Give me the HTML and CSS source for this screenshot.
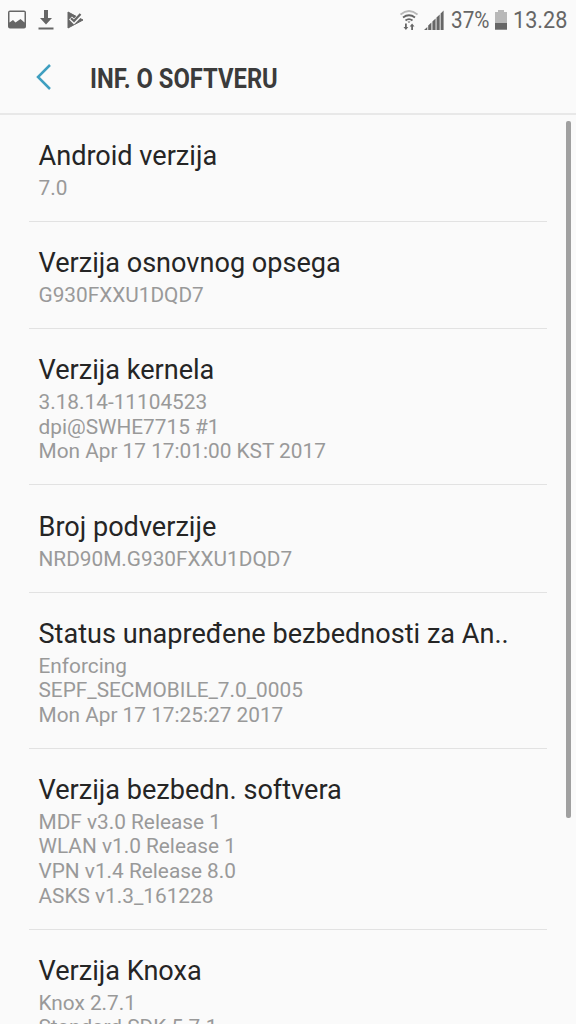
FILE: index.html
```html
<!DOCTYPE html>
<html lang="sr">
<head>
<meta charset="utf-8">
<title>Inf. o softveru</title>
<link rel="stylesheet" href="styles.css">
</head>
<body>
<header class="status">
  <div class="status-left">
    <svg class="icon-image" width="20" height="20" viewBox="0 0 20 20"><path fill="#666" fill-rule="evenodd" d="M3 0.500h14a2 2 0 0 1 2 2v14a2 2 0 0 1-2 2H3a2 2 0 0 1-2-2v-14a2 2 0 0 1 2-2zM2.500 2v10.500l3.500-2.500 2.500 2.500 5-3.500 4 3.500V2z"/></svg>
    <svg class="icon-download" width="16" height="20" viewBox="0 0 16 20"><path fill="#666" d="M6 0h4v8h4l-6 6.500L2 8h4zM.500 17.500h15v2H.500z"/></svg>
    <svg class="icon-play" width="17" height="18" viewBox="0 0 17 18"><path fill="#666" stroke="#666" stroke-linejoin="round" d="M1 1l15 8L1 17z"/><path fill="none" stroke="#fafafa" stroke-width="4.200" d="M3.500 7L7 10.500 14.500 3"/><path fill="none" stroke="#666" stroke-width="2.200" d="M4 7.300L7 10l6.500-7"/></svg>
  </div>
  <div class="status-right">
    <svg class="icon-wifi" width="18" height="20" viewBox="0 0 18 20"><path fill="none" stroke="#b8b8b8" stroke-width="1.800" d="M.500 4.500q8.500-7 17 0"/><path fill="none" stroke="#666" stroke-width="1.800" d="M3 7.500q6-4.500 12 0M5.500 10.500q3.500-2.800 7 0"/><path fill="#666" d="M7.500 11.500h3L9 13zM5 13.500h1.800V17h1.500L5.900 20l-2.400-3H5zM11.200 20v-3.500H9.700l2.400-3 2.400 3H13V20z"/></svg>
    <svg class="icon-signal" width="20" height="20" viewBox="0 0 20 20"><path fill="#666" d="M0 20l3.300-3v3zM4.200 15.500l3.200-3V20H4.200zM8.400 11.500l3.200-3V20H8.400zM12.500 7.500l3.200-3V20h-3.200zM16.600 3.500L19.600.500V20h-3z"/></svg>
    <span class="percent">37%</span>
    <svg class="icon-battery" width="12" height="20" viewBox="0 0 12 20"><path fill="#b8b8b8" d="M3 0h6v2h3v18H0V2h3z"/><path fill="#666" d="M0 13h12v6.500H0z"/></svg>
    <span class="clock">13.28</span>
  </div>
</header>
<nav class="bar">
  <svg class="back" width="16" height="26" viewBox="0 0 16 26"><path fill="none" stroke="#3f9fc0" stroke-width="2.500" d="M14 1L2 13l12 12"/></svg>
  <h1 class="title">INF. O SOFTVERU</h1>
</nav>
<main class="list">
  <section class="item"><h2>Android verzija</h2><p>7.0</p></section>
  <section class="item"><h2>Verzija osnovnog opsega</h2><p>G930FXXU1DQD7</p></section>
  <section class="item"><h2>Verzija kernela</h2><p>3.18.14-11104523<br>dpi@SWHE7715 #1<br>Mon Apr 17 17:01:00 KST 2017</p></section>
  <section class="item"><h2>Broj podverzije</h2><p>NRD90M.G930FXXU1DQD7</p></section>
  <section class="item"><h2>Status unapređene bezbednosti za An..</h2><p>Enforcing<br>SEPF_SECMOBILE_7.0_0005<br>Mon Apr 17 17:25:27 2017</p></section>
  <section class="item"><h2>Verzija bezbedn. softvera</h2><p>MDF v3.0 Release 1<br>WLAN v1.0 Release 1<br>VPN v1.4 Release 8.0<br>ASKS v1.3_161228</p></section>
  <section class="item"><h2>Verzija Knoxa</h2><p>Knox 2.7.1<br>Standard SDK 5.7.1</p></section>
</main>
<div class="scrollbar"></div>
</body>
</html>
```
FILE: styles.css
```css
* { box-sizing: border-box; margin: 0; padding: 0; }
body { position: relative; width: 576px; height: 1024px; overflow: hidden; background: #fafafa; font-family: Roboto, sans-serif; color: #252525; }
svg { display: block; flex: none; }
.status { display: flex; justify-content: space-between; height: 40px; padding: 0 9px 0 7px; color: #666; font-size: 23px; }
.status-left, .status-right { display: flex; align-items: center; }
.icon-download { margin-left: 11px; }
.icon-play { margin-left: 13px; }
.icon-signal { margin-left: 6px; }
.percent { width: 39px; margin-left: 7px; transform: scaleX(.9); transform-origin: left; }
.icon-battery { margin: 0 6px 0 5px; }
.clock { width: 54px; transform: scaleX(.94); transform-origin: left; }
.bar { display: flex; align-items: center; height: 75px; padding-left: 36px; border-bottom: 2px solid #e8e8e8; }
.title { padding-top: 4px; margin-left: 38px; font-size: 27px; line-height: 32px; font-weight: 700; color: #3b3b3b; white-space: nowrap; transform: scaleX(.88); transform-origin: left; }
.list { padding: 0 29px; }
.item { padding: 25.100px 9.500px 20.400px; border-bottom: 1px solid #e2e2e2; }
.item h2 { font-size: 27.100px; line-height: 32px; font-weight: 400; white-space: nowrap; }
.item p { margin-top: 4px; font-size: 20.800px; line-height: 24.600px; color: #999; white-space: nowrap; }
.scrollbar { position: absolute; left: 565.500px; top: 121px; width: 5px; height: 697px; border-radius: 2px; background: #a0a0a0; }
```
